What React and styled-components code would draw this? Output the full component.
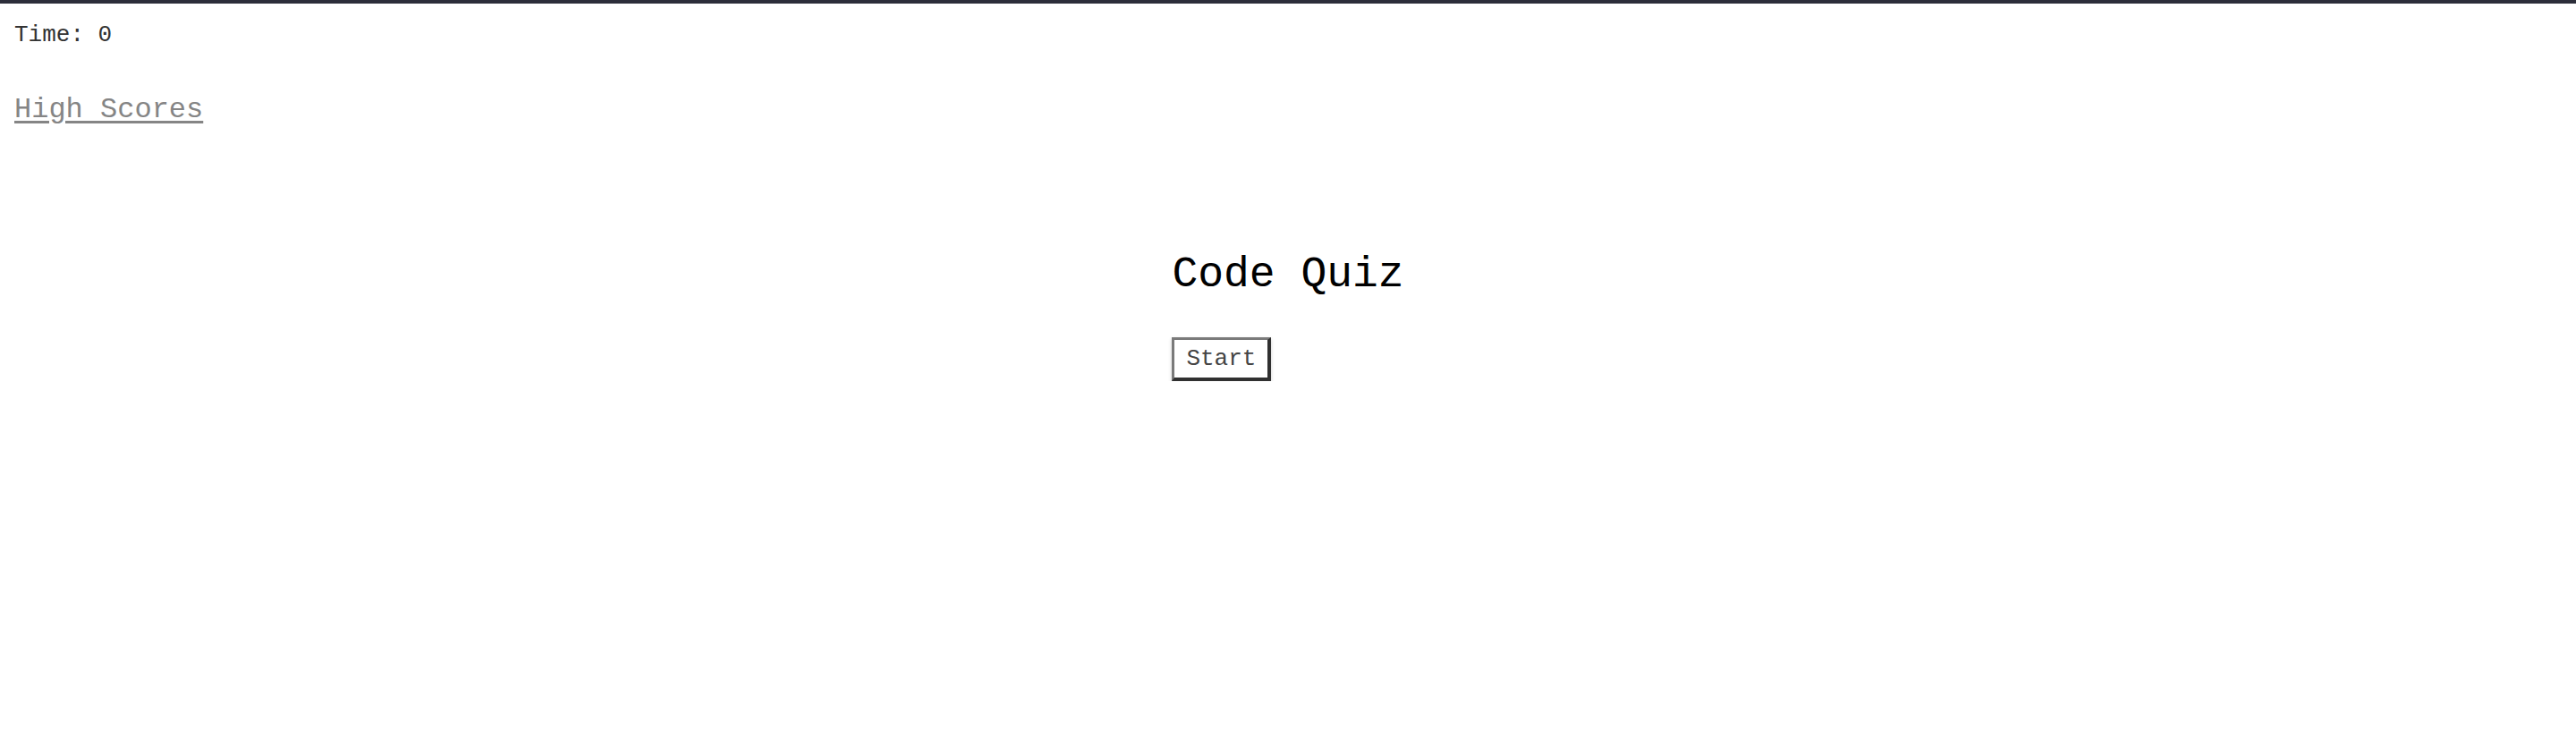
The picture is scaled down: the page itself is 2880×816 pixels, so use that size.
import React from 'react'
import styled, { createGlobalStyle } from 'styled-components'

const GlobalStyle = createGlobalStyle`
    html, body {
        margin: 0;
        background: #ffffff;
    }

    body {
        border-top: 4px solid #2c2e3a;
        font-family: "Liberation Mono", "DejaVu Sans Mono", monospace;
        color: #111111;
    }
`;

const Header = styled.header`
    display: flex;
    flex-direction: column;
    align-items: flex-start;
    padding: 20px 16px 0;
`;

const Timer = styled.div`
    font-size: 26px;
    color: #333333;
`;

const HighScores = styled.a`
    margin-top: 50px;
    font-size: 32px;
    color: #858585;
    text-decoration: underline;
    text-underline-offset: 4px;
    cursor: pointer;
`;

const Main = styled.main`
    display: flex;
    justify-content: center;
    margin-top: 140px;
`;

const Panel = styled.section`
    display: flex;
    flex-direction: column;
    align-items: flex-start;
    gap: 43px;
`;

const Title = styled.h1`
    margin: 0;
    font-size: 48px;
    font-weight: 400;
    color: #000000;
    line-height: 1.1;
`;

const StartButton = styled.button`
    font-family: inherit;
    font-size: 26px;
    color: #444444;
    background: #ffffff;
    padding: 6px 13px;
    border-style: solid;
    border-width: 3px 4px 4px 3px;
    border-color: #7a7a7a #303030 #303030 #7a7a7a;
    box-shadow: 0 2px 4px rgba(0, 0, 0, 0.2);
    cursor: pointer;
`;

const App = () => {
    return (
        <>
            <GlobalStyle />
            <Header>
                <Timer>Time: 0</Timer>
                <HighScores>High Scores</HighScores>
            </Header>
            <Main>
                <Panel>
                    <Title>Code Quiz</Title>
                    <StartButton>Start</StartButton>
                </Panel>
            </Main>
        </>
    )
}

export default App
